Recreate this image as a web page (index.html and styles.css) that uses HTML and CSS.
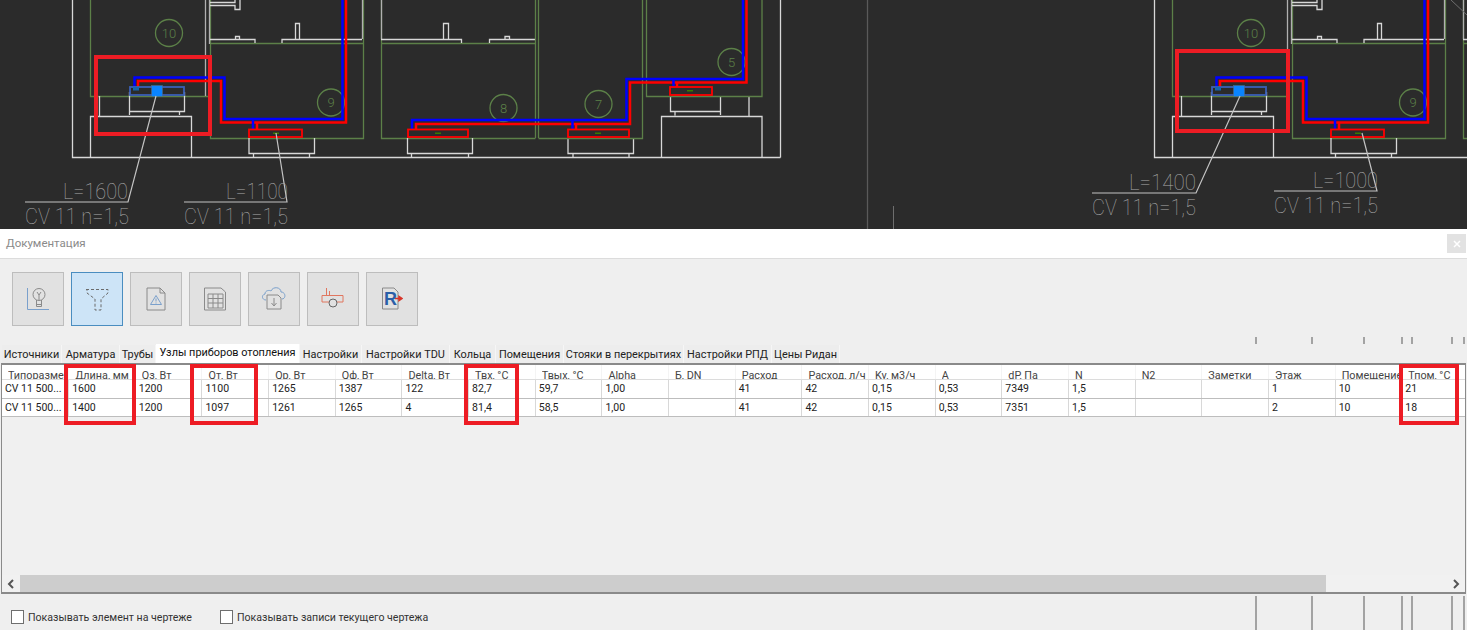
FILE: index.html
```html
<!DOCTYPE html>
<html lang="ru">
<head>
<meta charset="utf-8">
<title>Документация</title>
<link rel="stylesheet" href="styles.css">
</head>
<body>
<svg class="cad" viewBox="0 0 1467 229" width="1467" height="229" aria-label="Чертёж">
  <defs>
    <g id="bay">
      <path class="gr" d="M90.500 0V96.500H208M210.500 0V138.500H363.500V43.500H210.500M381.500 43.500H535.500M381.500 0V138.500H535.500M363.500 43.500V0"/>
      <path class="wh" d="M72.500 0V157.500H780.500"/>
      <path class="wh2" d="M205.500 0V96M209.500 0V44M362.500 0V39M381.500 0V39"/>
      <path class="wh" d="M210 2.500H235V0M210 5.500H235V9.500H240V0M210 39.500H255V43M282 43V39.500H362M235.500 39V36.500H239.500V39M295.500 39V23.500H299.500V39M381 39.500H461.500V43M489.500 43V39.500H535M443.500 39V23.500H448.500V39M505 39V36.500H509.500V39"/>
      <path class="wh" d="M99.500 96V116M129.500 92V111.500H184.500V92M129.500 111.500V115M179.500 111.500V115M90.500 157V116.500H191.500V157"/>
      <path class="wh" d="M249 138V153.500H314.500V138M253.500 153V157M309.500 153V157"/>
      <path class="wh" d="M407.500 138V153.500H472.500V138M411.500 153V157M468.500 153V157M568 138V153.500H633.500V138M573 153V157M629 153V157"/>
      <circle class="gr" cx="169" cy="33" r="13.500"/>
      <circle class="gr" cx="331" cy="102.500" r="13.500"/>
      <text class="rm" x="169" y="37.500">10</text>
      <text class="rm" x="331" y="107">9</text>
      <path class="blue" d="M134.500 87V77.500H224.500V119H342.500V0"/>
      <path class="red" d="M138 87V81H221V122.500H346V0"/>
      <path class="red" d="M257 129V122.500"/>
      <path class="blue" d="M253 129V119"/>
      <rect class="red1" x="249" y="129.500" width="53" height="7.500"/>
      <rect class="dot" x="273" y="132.500" width="6" height="1.500"/>
      <rect class="sel" x="130" y="87" width="54" height="8"/>
      <rect class="sel2" x="133" y="87" width="6" height="3.500"/>
      <rect class="grip" x="151.500" y="85.500" width="11" height="11"/>
    </g>
  </defs>
  <rect class="bg" width="1467" height="229"/>
  <use href="#bay"/>
  <use href="#bay" x="1082"/>
  <path class="wh" d="M780.500 0V157.500M661.500 157V116.500H762V157M670.500 96V111.500H720.500V96M675 111V115.500M720.500 115V96M749 96V116"/>
  <path class="gr" d="M535.500 0V138M538.500 0V138M538.500 138.500H642.500V0M646.500 0V96.500H762V0"/>
  <circle class="gr" cx="503.500" cy="108" r="13.500"/>
  <circle class="gr" cx="598.500" cy="104" r="13.500"/>
  <circle class="gr" cx="731.500" cy="62" r="13.500"/>
  <text class="rm" x="503.500" y="112.500">8</text>
  <text class="rm" x="598.500" y="108.500">7</text>
  <text class="rm" x="731.500" y="66.500">5</text>
  <path class="blue" d="M412 129V120H626.500V79H743V0"/>
  <path class="red" d="M416 129V124H630V82.500H746.500V0"/>
  <path class="blue" d="M572.500 129V120M673.500 87V79"/>
  <path class="red" d="M576 129V124M677 87V82"/>
  <rect class="red1" x="408" y="129.500" width="60" height="7.500"/>
  <rect class="red1" x="568" y="129.500" width="61" height="7.500"/>
  <rect class="red1" x="670" y="87" width="42" height="8"/>
  <rect class="dot" x="435" y="132.500" width="6" height="1.500"/>
  <rect class="dot" x="595" y="132.500" width="6" height="1.500"/>
  <rect class="dot" x="687" y="90" width="6" height="1.500"/>
  <path class="vline" d="M867.500 0V229"/>
  <path class="vthin" d="M893.500 206V229M1451 0L1467 15"/>
  <path class="lead" d="M156 96L128 202H25M276 133L287 202H184M1240 96L1196 193H1092M1362 133L1377 191H1274"/>
  <text class="note" x="63" y="199" textLength="65" lengthAdjust="spacingAndGlyphs">L=1600</text>
  <text class="note" x="25" y="224" textLength="104" lengthAdjust="spacingAndGlyphs">CV 11 n=1,5</text>
  <text class="note" x="226" y="199" textLength="62" lengthAdjust="spacingAndGlyphs">L=1100</text>
  <text class="note" x="184" y="224" textLength="104" lengthAdjust="spacingAndGlyphs">CV 11 n=1,5</text>
  <text class="note" x="1129" y="190" textLength="67" lengthAdjust="spacingAndGlyphs">L=1400</text>
  <text class="note" x="1092" y="215" textLength="104" lengthAdjust="spacingAndGlyphs">CV 11 n=1,5</text>
  <text class="note" x="1313" y="188" textLength="65" lengthAdjust="spacingAndGlyphs">L=1000</text>
  <text class="note" x="1274" y="213" textLength="104" lengthAdjust="spacingAndGlyphs">CV 11 n=1,5</text>
  <rect class="mark" x="96" y="57" width="114" height="77"/>
  <rect class="mark" x="1177" y="51" width="111" height="80"/>
</svg>

<header class="titlebar">
  <span class="title">Документация</span>
  <button class="close" type="button" aria-label="Закрыть">
    <svg width="8" height="8" viewBox="0 0 8 8"><path d="M1 1L7 7M7 1L1 7"/></svg>
  </button>
</header>

<section class="toolbar">
  <button class="tool" type="button">
    <svg width="26" height="26" viewBox="0 0 26 26"><path class="i-blue" d="M2.500 2V23.500H24"/><circle class="i-gray" cx="14" cy="8.500" r="6"/><path class="i-gray" d="M11.500 18.500H16.500M11.500 20.500H16.500M11.500 14V20.500M16.500 14V20.500M12 6L14 9L16 6M14 9V14"/></svg>
  </button>
  <button class="tool active" type="button">
    <svg width="26" height="26" viewBox="0 0 26 26"><path class="i-dash" d="M2 3.500H24V7L17 13V24H11V13L3 7V3.500"/></svg>
  </button>
  <button class="tool" type="button">
    <svg width="22" height="26" viewBox="0 0 22 26"><path class="i-gray" d="M2 2H15L20 7V24H2ZM15 2V7H20"/><path class="i-blue" d="M11 9.500L16.500 18.500H5.500ZM11 12.500V15.500M11 16.500V17.500"/></svg>
  </button>
  <button class="tool" type="button">
    <svg width="24" height="26" viewBox="0 0 24 26"><path class="i-gray" d="M1.500 2H18L22.500 6V24H1.500ZM5 8H20V22H5ZM5 12.500H20M5 17H20M10 8V22M15 8V22"/></svg>
  </button>
  <button class="tool" type="button">
    <svg width="26" height="26" viewBox="0 0 26 26"><path class="i-blue" d="M5 14C1 14 0 9 4 8C4 4 9 4 10 5C12 0 20 1 20 6C25 6 25 13 21 13"/><path class="i-gray" d="M6 9H17L20 12V23H6ZM13 12V19M10.500 17L13 20L15.500 17"/></svg>
  </button>
  <button class="tool" type="button">
    <svg width="24" height="24" viewBox="0 0 24 24"><path class="i-red" d="M1 8.500H22V15H1ZM5.500 1V8M8.500 4V8"/><circle class="i-circle" cx="12" cy="16" r="4"/></svg>
  </button>
  <button class="tool" type="button">
    <svg width="22" height="24" viewBox="0 0 22 24"><path class="i-gray" d="M1.500 1H13L17 5V22H1.500Z"/><text class="i-r" x="3" y="18">R</text><path class="i-arrow" d="M14 11.500H19M18 9.500V13.500L21 11.500Z"/></svg>
  </button>
</section>

<div class="ticks"><i></i><i></i><i></i><i></i><i></i><i></i><i></i></div>

<nav class="tabs">
  <span class="tab tw59">Источники</span>
  <span class="tab tw57">Арматура</span>
  <span class="tab tw35">Трубы</span>
  <span class="tab on tw143">Узлы приборов отопления</span>
  <span class="tab tw61">Настройки</span>
  <span class="tab tw87">Настройки TDU</span>
  <span class="tab tw45">Кольца</span>
  <span class="tab tw67">Помещения</span>
  <span class="tab tw119">Стояки в перекрытиях</span>
  <span class="tab tw87">Настройки РПД</span>
  <span class="tab tw67">Цены Ридан</span>
</nav>

<main class="sheet">
  <div class="grid-area">
    <table class="data">
      <thead>
        <tr>
          <th><span>Типоразмер</span></th><th><span>Длина, мм</span></th><th><span>Qз, Вт</span></th><th><span>Qт, Вт</span></th><th><span>Qр, Вт</span></th><th><span>Qф, Вт</span></th><th><span>Delta, Вт</span></th><th><span>Твх, °С</span></th><th><span>Твых, °С</span></th><th><span>Alpha</span></th><th><span>Б, DN</span></th><th><span>Расход</span></th><th><span>Расход, л/ч</span></th><th><span>Kv, м3/ч</span></th><th><span>A</span></th><th><span>dP, Па</span></th><th><span>N</span></th><th><span>N2</span></th><th><span>Заметки</span></th><th><span>Этаж</span></th><th><span>Помещение</span></th><th><span>Тпом, °С</span></th>
        </tr>
      </thead>
      <tbody>
        <tr><td>CV 11 500...</td><td>1600</td><td>1200</td><td>1100</td><td>1265</td><td>1387</td><td>122</td><td>82,7</td><td>59,7</td><td>1,00</td><td></td><td>41</td><td>42</td><td>0,15</td><td>0,53</td><td>7349</td><td>1,5</td><td></td><td></td><td>1</td><td>10</td><td>21</td></tr>
        <tr><td>CV 11 500...</td><td>1400</td><td>1200</td><td>1097</td><td>1261</td><td>1265</td><td>4</td><td>81,4</td><td>58,5</td><td>1,00</td><td></td><td>41</td><td>42</td><td>0,15</td><td>0,53</td><td>7351</td><td>1,5</td><td></td><td></td><td>2</td><td>10</td><td>18</td></tr>
      </tbody>
    </table>
  </div>
  <div class="hscroll">
    <span class="arrow"><svg width="8" height="10" viewBox="0 0 8 10"><path d="M6 1L2 5L6 9"/></svg></span>
    <span class="thumb"></span>
    <span class="arrow end"><svg width="8" height="10" viewBox="0 0 8 10"><path d="M2 1L6 5L2 9"/></svg></span>
  </div>
  <span class="box b1"></span>
  <span class="box b2"></span>
  <span class="box b3"></span>
  <span class="box b4"></span>
</main>

<footer class="footer">
  <label class="check c1"><span class="cb"></span>Показывать элемент на чертеже</label>
  <label class="check"><span class="cb"></span>Показывать записи текущего чертежа</label>
</footer>
<div class="ticks low"><i></i><i></i><i></i><i></i><i></i><i></i><i></i></div>
</body>
</html>
```
FILE: styles.css
```css
* { box-sizing: border-box; }
html, body { margin: 0; padding: 0; }
body {
  width: 1467px;
  height: 630px;
  overflow: hidden;
  background: #efefef;
  font-family: "Roboto", "Noto Sans", sans-serif;
  color: #333;
  position: relative;
}

/* drawing */
.cad { display: block; }
.cad path, .cad circle { fill: none; }
.bg { fill: #2b2b2b; }
.gr { stroke: #5c8048; stroke-width: 1.300; }
.wh { stroke: #d8d8d8; stroke-width: 1.300; }
.wh2 { stroke: #b0b0b0; stroke-width: 1.300; }
.blue { stroke: #0000ff; stroke-width: 2.500; }
.red { stroke: #ff0000; stroke-width: 2.500; }
.red1 { fill: none; stroke: #ff0000; stroke-width: 1.800; }
.dot { fill: #3a7a00; }
.sel { fill: none; stroke: #3a5fb5; stroke-width: 1.800; }
.sel2 { fill: #1565b0; }
.grip { fill: #0a84ff; stroke: #5a6a78; stroke-width: .5; }
.vline { stroke: #5a5a5a; stroke-width: 1.300; }
.vthin { stroke: #6e6e6e; stroke-width: 1; }
.lead { stroke: #c4c4c4; stroke-width: 1.200; }
.note { fill: #a8a8a8; font-family: "Roboto", sans-serif; font-weight: 100; font-size: 22px; }
.rm { fill: #5c8048; font-family: "Roboto", sans-serif; font-weight: 300; font-size: 13px; text-anchor: middle; }
.mark { fill: none; stroke: #ed1c24; stroke-width: 4; }

/* title bar */
.titlebar {
  height: 30px;
  background: #fff;
  border-bottom: 1px solid #dcdcdc;
  display: flex;
  align-items: center;
  justify-content: space-between;
  padding: 0 1px 0 6px;
}
.title { font-size: 11.500px; color: #8a8a8a; margin-bottom: 2px; }
.close {
  width: 19px;
  height: 19px;
  padding: 0;
  border: 0;
  background: #e2e2e2;
  display: flex;
  align-items: center;
  justify-content: center;
}
.close path { stroke: #fff; stroke-width: 1.500; fill: none; }

/* toolbar */
.toolbar {
  display: flex;
  padding: 13px 0 0 12px;
  height: 78px;
  align-items: flex-start;
}
.tool {
  width: 52px;
  height: 54px;
  margin-right: 7px;
  padding: 0;
  background: #e1e1e1;
  border: 1px solid #bdbdbd;
  display: flex;
  align-items: center;
  justify-content: center;
}
.tool.active { background: #cde4f7; border-color: #4a8dc0; }
.tool path, .tool circle { fill: none; stroke-width: 1; }
.i-gray { stroke: #8a8a8a; }
.i-blue { stroke: #7aa0cc; }
.i-red { stroke: #e0765f; }
.i-circle { stroke: #666; }
.tool .i-circle { fill: #e1e1e1; }
.i-dash { stroke: #6b6b6b; stroke-dasharray: 3 2; }
.i-r { fill: #2a5fa8; font-family: "Liberation Sans", sans-serif; font-weight: 700; font-size: 18px; }
.tool .i-arrow { fill: #d8352a; stroke: #d8352a; stroke-width: 1.500; }

/* tick marks */
.ticks {
  display: grid;
  grid-template-columns: 1255px 56px 52px 38px 10px 40px 12px 4px;
  height: 7px;
}
.ticks i { grid-row: 1; border-left: 2px solid #a3a3a3; height: 7px; }
.ticks i:nth-child(1) { grid-column: 2; }
.ticks i:nth-child(2) { grid-column: 3; }
.ticks i:nth-child(3) { grid-column: 4; }
.ticks i:nth-child(4) { grid-column: 5; }
.ticks i:nth-child(5) { grid-column: 6; }
.ticks i:nth-child(6) { grid-column: 7; }
.ticks i:nth-child(7) { grid-column: 8; }
.ticks.low { height: 34px; margin-top: 2px; }
.ticks.low i { height: 34px; }

/* tabs */
.tabs {
  display: flex;
  align-items: flex-end;
  height: 19px;
  padding-left: 2px;
  font-size: 10.900px;
  color: #222;
}
.tab {
  height: 18px;
  line-height: 19px;
  background: #ededed;
  border-right: 1px solid #f6f6f6;
  text-align: center;
  white-space: nowrap;
}
.tab.on { background: #fff; height: 19px; color: #111; line-height: 18px; }
.tw35 { width: 36px; }
.tw45 { width: 46px; }
.tw57 { width: 58px; }
.tw59 { width: 60px; }
.tw61 { width: 62px; }
.tw67 { width: 68px; }
.tw87 { width: 88px; }
.tw119 { width: 120px; }
.tw143 { width: 144px; }

/* sheet */
.sheet {
  position: relative;
  margin-left: 1px;
  width: 1465px;
  height: 231px;
  border: 1px solid #8a8a8a;
  border-top-width: 2px;
  border-bottom-width: 2px;
  background: #f0f0f0;
  display: flex;
  flex-direction: column;
}
.grid-area { flex: 1; overflow: hidden; }
.data {
  table-layout: fixed;
  width: 1467px;
  border-collapse: collapse;
  font-size: 10.500px;
  color: #222;
}
.data th {
  padding: 3px 0 0 6px;
  background: #fff;
  font-size: 10.800px;
  font-weight: 400;
  text-align: left;
  color: #444;
  border-bottom: 1px solid #dcdcdc;
  border-right: 1px solid #f4f4f4;
}
.data th span {
  display: block;
  height: 11px;
  line-height: 15px;
  overflow: hidden;
  white-space: nowrap;
}
.data td {
  height: 18.500px;
  padding: 0 0 0 3px;
  background: #fff;
  white-space: nowrap;
  overflow: hidden;
  border-right: 1px solid #d8d8d8;
  border-bottom: 1px solid #bdbdbd;
}
.hscroll { height: 17px; display: flex; background: #f1f1f1; flex: none; }
.arrow { width: 18px; display: flex; align-items: center; justify-content: center; }
.arrow.end { margin-left: auto; }
.arrow path { fill: none; stroke: #555; stroke-width: 2; }
.thumb { width: 1306px; background: #cdcdcd; }
.box { position: absolute; border: 4px solid #ed1c24; top: -1px; height: 61px; }
.b1 { left: 62px; width: 72px; }
.b2 { left: 188px; width: 68px; }
.b3 { left: 462px; width: 55px; }
.b4 { left: 1397px; width: 60px; }

/* footer */
.footer {
  position: absolute;
  left: 11px;
  top: 610px;
  display: flex;
  font-size: 10.600px;
  color: #333;
}
.check { display: flex; align-items: center; gap: 4px; height: 14px; white-space: nowrap; }
.c1 { width: 209px; }
.cb { width: 13px; height: 14px; background: #fff; border: 1px solid #6e6e6e; }
```
